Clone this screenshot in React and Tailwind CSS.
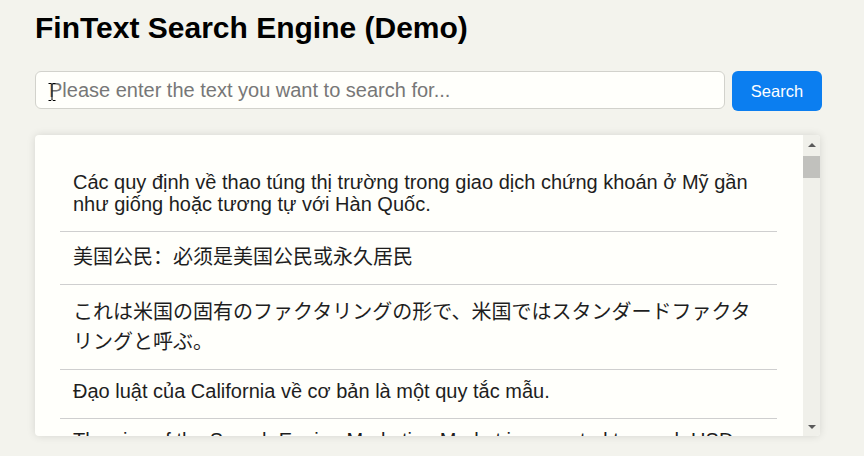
import React, { useState } from 'react';

// --- Search results (mixed languages) ---
const LATIN = 'pt-[10px] pb-[16px] pl-[13px] pr-0 leading-[22px]';
const CHINESE = "pt-[12px] pb-[14px] px-[13px] leading-[26px] font-['Liberation_Sans','Noto_Sans_CJK_SC',sans-serif]";
const JAPANESE = "py-[12px] pl-[13px] pr-[16px] leading-[30px] font-['Liberation_Sans','Noto_Sans_CJK_JP',sans-serif]";

const baseResults = [
  { text: 'Các quy định về thao túng thị trường trong giao dịch chứng khoán ở Mỹ gần như giống hoặc tương tự với Hàn Quốc.', cls: LATIN },
  { text: '美国公民：必须是美国公民或永久居民', cls: CHINESE },
  { text: 'これは米国の固有のファクタリングの形で、米国ではスタンダードファクタリングと呼ぶ。', cls: JAPANESE },
  { text: 'Đạo luật của California về cơ bản là một quy tắc mẫu.', cls: LATIN },
  { text: 'The size of the Search Engine Marketing Market is expected to reach USD (IPO) by 2030.', cls: LATIN },
  { text: 'Ngân hàng Nhà nước quyết định giữ nguyên lãi suất điều hành trong quý này.', cls: LATIN },
  { text: '证券交易委员会要求上市公司按季度披露财务报告', cls: CHINESE },
  { text: '日本銀行は金融政策決定会合で短期金利の据え置きを決定した。', cls: JAPANESE },
  { text: 'Federal regulators announced new disclosure requirements for public companies.', cls: LATIN },
  { text: 'Tỷ giá hối đoái giữa đồng Việt Nam và đô la Mỹ tiếp tục ổn định.', cls: LATIN },
];

const results = Array.from({ length: 2 }).flatMap(() => baseResults);

const Cursor = () => (
  <svg
    className="absolute left-[13px] top-[12px] pointer-events-none"
    width="8"
    height="18"
    viewBox="0 0 8 18"
    fill="none"
    stroke="#000"
    strokeWidth="1"
  >
    <path d="M0.5 0.5h2.5l1 1l1-1h2.5M4 1.5v15M0.5 17.5h2.5l1-1l1 1h2.5" />
  </svg>
);

const SearchBar = () => {
  const [query, setQuery] = useState('');

  return (
    <div className="flex items-start gap-[7px]">
      <div className="relative">
        <input
          value={query}
          onChange={(e) => setQuery(e.target.value)}
          placeholder="Please enter the text you want to search for..."
          className="w-[690px] h-[38px] rounded-[6px] border border-[#d2d2cc] bg-[#fffffb] pl-[13px] text-[20px] text-[#222] placeholder:text-[#777] outline-none"
        />
        <Cursor />
      </div>
      <button className="w-[90px] h-[40px] rounded-[6px] bg-[#0b7ef0] text-white text-[16.5px]">
        Search
      </button>
    </div>
  );
};

// windows-like scrollbar on the right of the result box
const Scrollbar = () => (
  <div className="w-[17px] flex flex-col bg-[#f0f0ea]">
    <div className="h-[19px] flex items-center justify-center">
      <svg width="8" height="5" viewBox="0 0 8 5"><path d="M0 5L4 1L8 5Z" fill="#5a5a5a" /></svg>
    </div>
    <div className="mt-[2px] h-[22px] bg-[#c1c1bd]" />
    <div className="flex-1" />
    <div className="h-[17px] flex items-center justify-center">
      <svg width="8" height="5" viewBox="0 0 8 5"><path d="M0 0L4 4L8 0Z" fill="#5a5a5a" /></svg>
    </div>
  </div>
);

const ResultList = () => (
  <div className="mt-[24px] w-[785px] h-[301px] flex overflow-hidden rounded-[4px] bg-[#fffffb] shadow-[0_0_8px_rgba(0,0,0,0.12)]">
    <div className="flex-1 overflow-hidden pl-[25px] pr-[26px] pt-[26px]">
      <ul>
        {results.map((item, idx) => (
          <li
            key={idx}
            className={`border-b border-[#cfcfcf] text-[20px] text-[#1e1e1e] ${item.cls}`}
          >
            {item.text}
          </li>
        ))}
      </ul>
    </div>
    <Scrollbar />
  </div>
);

const App = () => (
  <main className="min-h-[456px] bg-[#f3f3ed] px-[35px] pt-[11px] font-['Liberation_Sans','Noto_Sans_CJK_SC',sans-serif]">
    <h1 className="mb-[26px] text-[30px] leading-[34px] font-bold text-black">FinText Search Engine (Demo)</h1>
    <SearchBar />
    <ResultList />
  </main>
);

export default App;
